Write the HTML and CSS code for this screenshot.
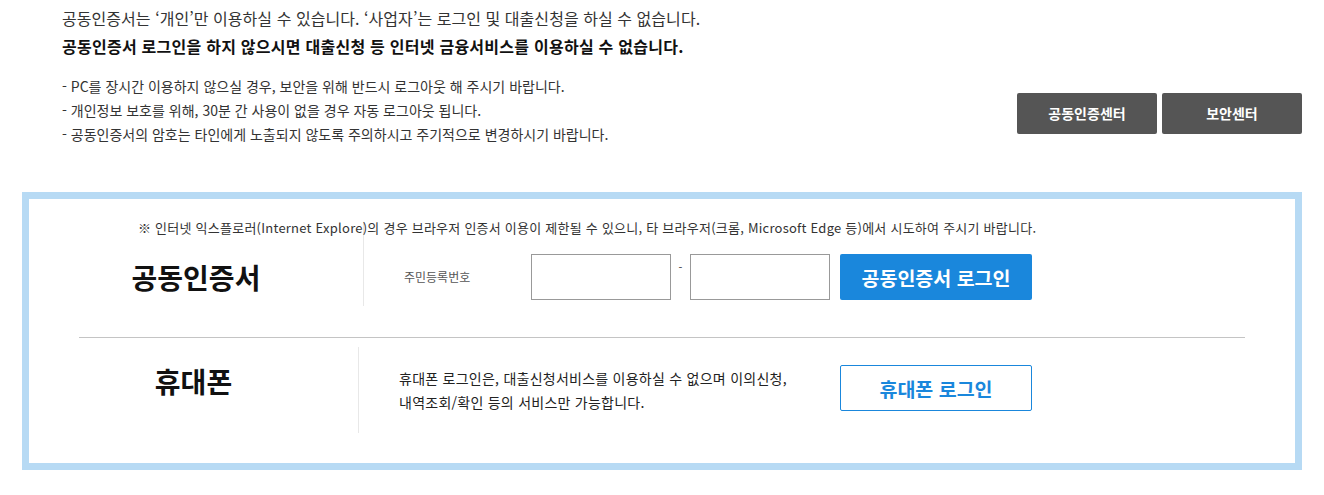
FILE: index.html
```html
<!DOCTYPE html>
<html lang="ko">
<head>
    <meta charset="UTF-8">
    <meta name="viewport" content="width=device-width, initial-scale=1.0">
    <title>로그인</title>
    <link rel="stylesheet" href="styles.css">
</head>
<body>
    <div class="top">
        <div class="intro">
            <p class="intro-text">공동인증서는 ‘개인’만 이용하실 수 있습니다. ‘사업자’는 로그인 및 대출신청을 하실 수 없습니다.</p>
            <p class="intro-strong">공동인증서 로그인을 하지 않으시면 대출신청 등 인터넷 금융서비스를 이용하실 수 없습니다.</p>
            <ul class="notes">
                <li>- PC를 장시간 이용하지 않으실 경우, 보안을 위해 반드시 로그아웃 해 주시기 바랍니다.</li>
                <li>- 개인정보 보호를 위해, 30분 간 사용이 없을 경우 자동 로그아웃 됩니다.</li>
                <li>- 공동인증서의 암호는 타인에게 노출되지 않도록 주의하시고 주기적으로 변경하시기 바랍니다.</li>
            </ul>
        </div>
        <div class="links">
            <a href="#" class="link-btn">공동인증센터</a>
            <a href="#" class="link-btn">보안센터</a>
        </div>
    </div>

    <div class="login-box">
        <p class="ie-notice">※ 인터넷 익스플로러(Internet Explore)의 경우 브라우저 인증서 이용이 제한될 수 있으니, 타 브라우저(크롬, Microsoft Edge 등)에서 시도하여 주시기 바랍니다.</p>

        <div class="login-row cert-row">
            <h2 class="row-title">공동인증서</h2>
            <div class="row-body">
                <label for="jumin1" class="field-label">주민등록번호</label>
                <input type="text" id="jumin1" class="jumin">
                <span class="dash">-</span>
                <input type="password" id="jumin2" class="jumin">
                <button type="button" class="btn-primary">공동인증서 로그인</button>
            </div>
        </div>

        <hr class="row-line">

        <div class="login-row phone-row">
            <h2 class="row-title">휴대폰</h2>
            <div class="row-body">
                <p class="phone-text">휴대폰 로그인은, 대출신청서비스를 이용하실 수 없으며 이의신청,<br>내역조회/확인 등의 서비스만 가능합니다.</p>
                <button type="button" class="btn-outline">휴대폰 로그인</button>
            </div>
        </div>
    </div>
</body>
</html>
```

FILE: styles.css
```css
body {
    margin: 0;
    font-family: "Noto Sans CJK KR", "Noto Sans", sans-serif;
    color: #333;
    background-color: #fff;
}
p, ul, h2 {
    margin: 0;
    padding: 0;
}
.top {
    display: flex;
    justify-content: space-between;
    padding: 6px 22px 0 62px;
}
.intro-text {
    font-size: 16px;
    line-height: 24px;
    letter-spacing: 0.05px;
}
.intro-strong {
    font-size: 16px;
    font-weight: bold;
    color: #111;
    line-height: 24px;
    letter-spacing: 0.25px;
    margin-top: 4px;
}
.notes {
    list-style: none;
    margin-top: 16px;
}
.notes li {
    font-size: 14px;
    line-height: 24px;
}
.links {
    display: flex;
    gap: 5px;
    margin-top: 87px;
    align-self: flex-start;
}
.link-btn {
    display: block;
    width: 140px;
    height: 41px;
    line-height: 41px;
    text-align: center;
    background-color: #555;
    color: #fff;
    font-size: 14px;
    font-weight: bold;
    text-decoration: none;
    border-radius: 2px;
}
.login-box {
    position: relative;
    margin: 46px 22px 0;
    border: 7px solid #b7daf4;
    padding: 24px 0 30px;
}
.ie-notice {
    position: absolute;
    top: 20px;
    left: 109px;
    font-size: 13px;
    line-height: 18px;
    letter-spacing: 0.24px;
    color: #333;
}
.login-row {
    display: flex;
    align-items: flex-start;
}
.row-title {
    font-size: 28px;
    font-weight: bold;
    color: #111;
    line-height: 36px;
    text-align: center;
}
.row-body {
    display: flex;
    align-items: flex-start;
    border-left: 1px solid #e8e8e8;
    padding-left: 40px;
}
.cert-row .row-title {
    width: 334px;
    padding-top: 36px;
}
.cert-row .row-body {
    height: 83px;
    box-sizing: border-box;
    padding-top: 31px;
}
.field-label {
    width: 127px;
    font-size: 12px;
    color: #555;
    line-height: 46px;
}
.jumin {
    width: 140px;
    height: 46px;
    box-sizing: border-box;
    border: 1px solid #999;
    margin: 0;
    padding: 0 8px;
}
.dash {
    width: 19px;
    text-align: center;
    font-size: 11px;
    line-height: 26px;
}
.btn-primary {
    margin-left: 10px;
    width: 192px;
    height: 46px;
    border: none;
    border-radius: 2px;
    background-color: #1a87dc;
    color: #fff;
    font-family: inherit;
    font-size: 19.5px;
    font-weight: bold;
    cursor: pointer;
}
.row-line {
    margin: 31px 50px 9px;
    border: none;
    border-top: 1px solid #c4c4c4;
}
.phone-row .row-title {
    width: 329px;
    padding-top: 16px;
}
.phone-row .row-body {
    height: 86px;
    box-sizing: border-box;
    padding-top: 19px;
}
.phone-text {
    width: 441px;
    font-size: 14px;
    line-height: 24px;
    letter-spacing: 0.25px;
    color: #222;
}
.btn-outline {
    margin-top: -1px;
    width: 192px;
    height: 46px;
    border: 1px solid #1a87dc;
    border-radius: 2px;
    background-color: #fff;
    color: #1a87dc;
    font-family: inherit;
    font-size: 19.5px;
    font-weight: bold;
    cursor: pointer;
}
```
